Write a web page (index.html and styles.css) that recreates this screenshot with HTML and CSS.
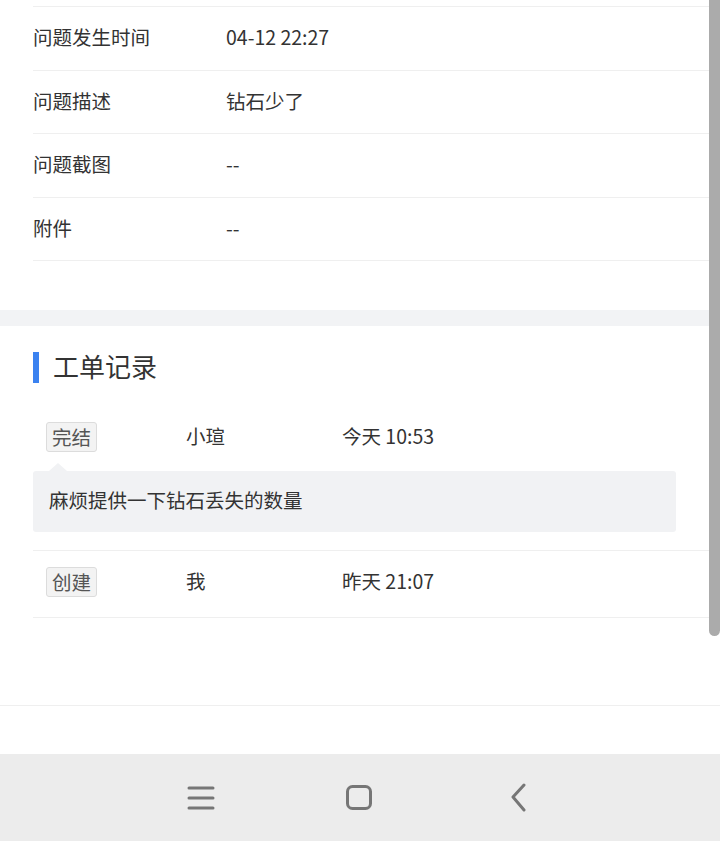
FILE: index.html
```html
<!DOCTYPE html>
<html lang="zh-CN">
<head>
    <meta charset="UTF-8">
    <meta name="viewport" content="width=device-width, initial-scale=1.0">
    <title>工单详情</title>
    <link rel="stylesheet" href="styles.css">
</head>
<body>
    <div class="page">
        <div class="scrollbar"></div>

        <!-- 问题信息 -->
        <section class="info">
            <div class="cut"></div>
            <div class="row"><span class="label">问题发生时间</span><span class="value">04-12 22:27</span></div>
            <div class="row"><span class="label">问题描述</span><span class="value">钻石少了</span></div>
            <div class="row"><span class="label">问题截图</span><span class="value">--</span></div>
            <div class="row"><span class="label">附件</span><span class="value">--</span></div>
        </section>

        <div class="band"></div>

        <!-- 工单记录 -->
        <section class="records">
            <h2 class="title">工单记录</h2>
            <div class="record">
                <div class="record-head">
                    <span class="tag">完结</span>
                    <span class="name">小瑄</span>
                    <span class="time">今天 10:53</span>
                </div>
                <div class="bubble">麻烦提供一下钻石丢失的数量</div>
            </div>
            <div class="record">
                <div class="record-head">
                    <span class="tag">创建</span>
                    <span class="name">我</span>
                    <span class="time">昨天 21:07</span>
                </div>
            </div>
        </section>

        <div class="footer-space"></div>

        <nav class="navbar">
            <svg class="nav-icon" width="30" height="30" viewBox="0 0 30 30">
                <path d="M3 5h24M3 15h24M3 25h24" stroke="#767676" stroke-width="3" stroke-linecap="round" fill="none"/>
            </svg>
            <svg class="nav-icon" width="30" height="30" viewBox="0 0 30 30">
                <rect x="3.5" y="3.5" width="23" height="22" rx="5" stroke="#767676" stroke-width="3" fill="none"/>
            </svg>
            <svg class="nav-icon" width="30" height="30" viewBox="0 0 30 30">
                <path d="M22 2L11 14L22 27" stroke="#767676" stroke-width="3" stroke-linecap="round" stroke-linejoin="round" fill="none"/>
            </svg>
        </nav>
    </div>
</body>
</html>
```
FILE: styles.css
```css
html, body {
    margin: 0;
    padding: 0;
    background-color: #fff;
}

body {
    font-family: "Noto Sans CJK SC", "Noto Sans", sans-serif;
    color: #333;
    font-size: 19.5px;
}

.page {
    position: relative;
    width: 720px;
    height: 841px;
    overflow: hidden;
    display: flex;
    flex-direction: column;
}

.scrollbar {
    position: absolute;
    top: 0;
    left: 709px;
    width: 11px;
    height: 636px;
    background-color: #ababab;
    border-radius: 0 0 6px 6px;
}

.info {
    padding-left: 33px;
    padding-bottom: 49px;
}

.cut {
    height: 6px;
    border-bottom: 1px solid #efefef;
}

.row {
    box-sizing: border-box;
    display: flex;
    align-items: center;
    height: 63.5px;
    padding-bottom: 3px;
    border-bottom: 1px solid #efefef;
}

.label {
    width: 193px;
}

.band {
    height: 16px;
    background-color: #f2f3f5;
}

.records {
    padding-left: 33px;
}

.title {
    margin: 26px 0 22px;
    height: 28px;
    line-height: 28px;
    padding-bottom: 3px;
    font-size: 26px;
    font-weight: normal;
    color: #333;
    border-left: 6px solid #3b82f0;
    padding-left: 14px;
}

.record {
    padding: 17px 0 18px;
    border-bottom: 1px solid #efefef;
}

.record + .record {
    padding: 16px 0 20px;
}

.record-head {
    display: flex;
    align-items: center;
    height: 30px;
    padding-left: 13px;
}

.tag {
    box-sizing: border-box;
    width: 51px;
    height: 30px;
    line-height: 27px;
    text-align: center;
    color: #555;
    background-color: #f3f3f3;
    border: 1px solid #dcdcdc;
    border-radius: 3px;
    margin-right: 89px;
}

.name,
.time {
    line-height: 28px;
    padding-bottom: 2px;
}

.name {
    width: 156px;
}

.bubble {
    position: relative;
    margin: 19px 44px 0 0;
    height: 58px;
    line-height: 58px;
    padding: 0 0 3px 16px;
    background-color: #f1f2f4;
    border-radius: 3px;
}

.bubble::before {
    content: "";
    position: absolute;
    top: -8px;
    left: 16px;
    border-left: 9px solid transparent;
    border-right: 9px solid transparent;
    border-bottom: 8px solid #f1f2f4;
}

.footer-space {
    height: 87px;
    border-bottom: 1px solid #efefef;
    margin-bottom: 48px;
}

.navbar {
    flex: 1;
    display: flex;
    align-items: center;
    justify-content: center;
    gap: 128px;
    padding-right: 3px;
    background-color: #ececec;
}

.nav-icon {
    display: block;
}
```
